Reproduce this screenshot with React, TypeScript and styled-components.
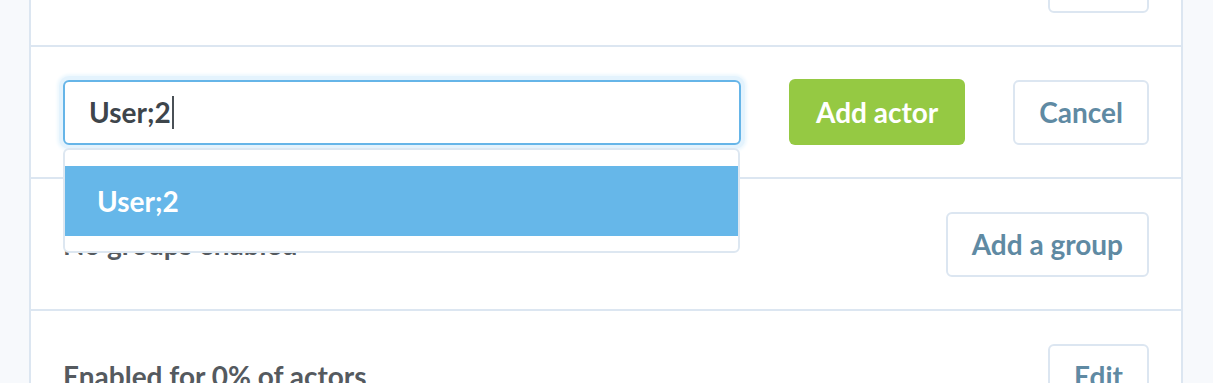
import React from "react";
import styled, { createGlobalStyle } from "styled-components";

const Global = createGlobalStyle`
  html, body { margin: 0; padding: 0; }
  body {
    background: #f7f9fc;
    font-family: Lato, "Open Sans", "Liberation Sans", sans-serif;
    overflow: hidden;
  }
`;

const Page = styled.div`
  width: 1213px;
  height: 383px;
  overflow: hidden;
`;

const Card = styled.div`
  margin-top: -85px;
  margin-left: 29px;
  width: 1154px;
  box-sizing: border-box;
  background: #fff;
  border-left: 2px solid #dce6f1;
  border-right: 2px solid #dce6f1;
`;

const Row = styled.div`
  display: flex;
  align-items: center;
  justify-content: space-between;
  gap: 48px;
  height: 130px;
  padding: 0 32px 0 32px;
  border-bottom: 2px solid #dce6f1;
  position: relative;
`;

const Text = styled.div`
  font-size: 28px;
  font-weight: 700;
  color: #555a5f;
`;

const Button = styled.button<{ $primary?: boolean }>`
  flex: none;
  box-sizing: border-box;
  height: ${(p) => (p.$primary ? 66 : 65)}px;
  padding: 0 ${(p) => (p.$primary ? 27 : 24)}px;
  border-radius: 6px;
  border: ${(p) => (p.$primary ? "none" : "2px solid #dce6f1")};
  background: ${(p) => (p.$primary ? "#95c943" : "#fff")};
  color: ${(p) => (p.$primary ? "#fff" : "#5f8aa3")};
  font-family: Lato, "Open Sans", "Liberation Sans", sans-serif;
  font-size: 28px;
  font-weight: 700;
  line-height: 1;
`;

const Field = styled.div`
  flex: 1;
  position: relative;
`;

const InputBox = styled.div`
  box-sizing: border-box;
  height: 65px;
  display: flex;
  align-items: center;
  padding: 0 24px;
  border: 2px solid #66b5e8;
  border-radius: 6px;
  box-shadow: 0 0 0 4px #e4f3fd, 0 0 3px 6px #eef8fe;
  font-size: 28px;
  font-weight: 700;
  color: #3e454b;
`;

const Caret = styled.span`
  display: inline-block;
  width: 2px;
  height: 33px;
  margin-left: 1px;
  background: #4a5056;
`;

const Menu = styled.div`
  position: absolute;
  top: 68px;
  left: 0;
  width: 677px;
  box-sizing: border-box;
  padding: 16px 0 15px;
  background: #fff;
  border: 2px solid #dde7f1;
  border-radius: 6px;
  z-index: 2;
`;

const MenuItem = styled.div<{ $active?: boolean }>`
  height: 70px;
  display: flex;
  align-items: center;
  padding-left: 32px;
  background: ${(p) => (p.$active ? "#66b7e9" : "transparent")};
  color: ${(p) => (p.$active ? "#fff" : "#3e454b")};
  font-size: 28px;
  font-weight: 700;
`;

export default function App() {
  return (
    <Page>
      <Global />
      <Card>
        <Row>
          <Text />
          <Button>Edit</Button>
        </Row>
        <Row>
          <Field>
            <InputBox>
              User;2
              <Caret />
            </InputBox>
            <Menu>
              <MenuItem $active>User;2</MenuItem>
            </Menu>
          </Field>
          <Button $primary>Add actor</Button>
          <Button>Cancel</Button>
        </Row>
        <Row>
          <Text>No groups enabled</Text>
          <Button>Add a group</Button>
        </Row>
        <Row>
          <Text>Enabled for 0% of actors</Text>
          <Button>Edit</Button>
        </Row>
      </Card>
    </Page>
  );
}
